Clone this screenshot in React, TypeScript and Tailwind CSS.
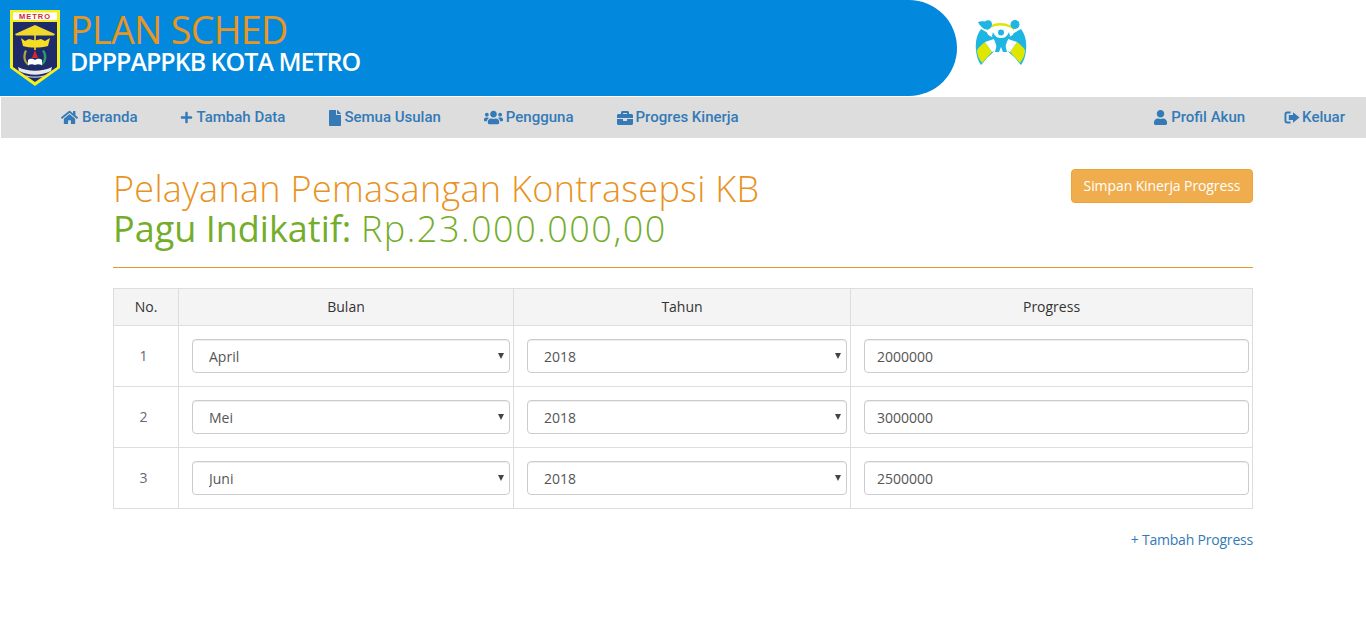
import { FaHome, FaPlus, FaFile, FaUsers, FaBriefcase, FaUser } from 'react-icons/fa';

const rows = [
  { no: 1, bulan: 'April', tahun: '2018', progress: '2000000' },
  { no: 2, bulan: 'Mei', tahun: '2018', progress: '3000000' },
  { no: 3, bulan: 'Juni', tahun: '2018', progress: '2500000' },
];
const bulanList = ['Januari', 'Februari', 'Maret', 'April', 'Mei', 'Juni', 'Juli', 'Agustus', 'September', 'Oktober', 'November', 'Desember'];

function LogoutIcon() {
  return (
    <svg width="16" height="15" viewBox="0 0 16 15" fill="currentColor">
      <path d="M6.5 1.5H3.2A2.7 2.7 0 0 0 .5 4.2v6.6A2.7 2.7 0 0 0 3.2 13.5h3.3v-1.9H3.4a1 1 0 0 1-1-1V4.4a1 1 0 0 1 1-1h3.1z" />
      <path d="M9 2.2 15.5 7.5 9 12.8V10H4.8V5H9z" />
    </svg>
  );
}

function MetroLogo() {
  return (
    <svg width="50" height="76" viewBox="0 0 50 76">
      <path d="M0 0h50v58L25 76 0 58z" fill="#f7ee1f" />
      <rect x="3" y="2.5" width="44" height="7.5" fill="#fff" />
      <text x="25" y="9" textAnchor="middle" fontSize="7.5" fontWeight="900" fill="#d9252b" fontFamily="Liberation Sans, sans-serif" letterSpacing="1">METRO</text>
      <path d="M3 12h44v45L25 72 3 57z" fill="#1f2a6b" />
      <path d="M25 15 45 24l-1 1.5H6L5 24z" fill="#f0d92a" />
      <rect x="24.2" y="16" width="1.6" height="24" fill="#f0d92a" />
      <path d="M11 28l4 3 4-2 6 1.5 6-1.5 4 2 5-3-2 8c-8 2-18 2-25 0z" fill="#f5dd24" />
      <path d="M15 40c-3 6-2 13 4 16l-1-3c-3-3-3-8-1-12z" fill="#a7a93a" />
      <path d="M34 40c4 5 3 13-3 16l1-3c2-3 3-8 0-12z" fill="#2f9a6b" />
      <path d="M25 40l3 8h-6z" fill="#d9252b" />
      <path d="M18 50c3-2 5-1 7 0 2-1 4-2 7 0v5c-3-1-5-1-7 0-2-1-4-1-7 0z" fill="#fff" />
      <path d="M8 57c10 5 24 5 34 0l-1 4c-11 5-21 5-32 0z" fill="#e8e8e8" />
      <path d="M15 65c6 2 14 2 20 0l-2 2c-5 1-11 1-16 0z" fill="#cfcfcf" />
    </svg>
  );
}

function KbLogo() {
  return (
    <svg width="52" height="46" viewBox="0 0 52 46">
      <path d="M6 9C2 14 0 22 1 30c.5 6 2 11 5 15L26 24l20 21c3-4 4.500-9 5-15 1-8-1-16-5-21l-7 4H13z" fill="#1db5e2" />
      <path d="M10 22l7 10-10 11c-3-4-5-8-5-13 2-3 5-6 8-8z" fill="#dfe600" />
      <path d="M42 22l-7 10 10 11c3-4 5-8 5-13-2-3-5-6-8-8z" fill="#dfe600" />
      <path d="M7 46c3-8 10-14 19-15 9 1 16 7 19 15z" fill="#fff" />
      <path d="M10 22l9-3 4 11-6 2z" fill="#fff" />
      <path d="M42 22l-9-3-4 11 6 2z" fill="#fff" />
      <ellipse cx="25.500" cy="10.500" rx="13.500" ry="7.500" fill="#dfe600" />
      <ellipse cx="25.500" cy="12" rx="13.500" ry="6.500" fill="#fff" />
      <circle cx="26" cy="12.500" r="3" fill="#1db5e2" />
      <path d="M18 12c2 5 5 6 8 6s6-1 8-6l1 4c-2 4-4 6-5 8l2 8h-4l-2-5-2 5h-4l2-8c-1-2-3-4-5-8z" fill="#1db5e2" />
      <path d="M3 2c2-1 5-1 7-.5 3-2.500 7-1 7 2.500s-3 6-6 5.500C8 9 5 6 3 2z" fill="#1db5e2" />
      <circle cx="40" cy="4.500" r="4.500" fill="#1db5e2" />
    </svg>
  );
}

function NavLink({ icon, label, gap }: { icon: React.ReactNode; label: string; gap: string }) {
  return (
    <a href="#" className={`flex items-center text-[15px] font-medium text-[#337ab7] ${gap}`}>
      {icon}
      {label}
    </a>
  );
}

function SelectBox({ value, options }: { value: string; options: string[] }) {
  return (
    <div className="relative">
      <select
        defaultValue={value}
        className="h-[34px] w-full appearance-none rounded border border-[#ccc] bg-white pl-[16px] text-[14px] text-[#555] shadow-[inset_0_1px_1px_rgba(0,0,0,0.075)]"
      >
        {options.map(o => <option key={o}>{o}</option>)}
      </select>
      <span className="absolute right-[6px] top-[14px] h-0 w-0 border-x-[3.5px] border-t-[6px] border-x-transparent border-t-[#444]" />
    </div>
  );
}

export default function App() {
  return (
    <div className="min-h-[618px] bg-white font-['Open_Sans',sans-serif]">
      <header className="flex h-[97px] items-start">
        <div className="flex h-[96px] w-[957px] items-center rounded-r-[48px] bg-[#0288dc] pl-[10px]">
          <MetroLogo />
          <div className="mb-[8px] ml-[10px] flex flex-col">
            <span className="text-[37.5px] leading-[38px] tracking-[-0.6px] text-[#e8961f]">PLAN SCHED</span>
            <span className="mt-[-4px] text-[25px] leading-[32px] font-semibold tracking-[-1px] text-white">DPPPAPPKB KOTA METRO</span>
          </div>
        </div>
        <div className="ml-[18px] mt-[20px]">
          <KbLogo />
        </div>
      </header>

      <nav className="ml-[1px] flex h-[41px] items-center justify-between bg-[#ddd] pl-[60px] pr-[21px] font-['Roboto',sans-serif]">
        <div className="flex items-center gap-[43px]">
          <NavLink gap="gap-[4px] -mr-[1px]" icon={<FaHome size={17} />} label="Beranda" />
          <NavLink gap="gap-[4px]" icon={<FaPlus size={13} />} label="Tambah Data" />
          <NavLink gap="gap-[4px]" icon={<FaFile size={16} className="-ml-[1px] -mr-[3px]" />} label="Semua Usulan" />
          <NavLink gap="gap-[3px]" icon={<FaUsers size={19} />} label="Pengguna" />
          <NavLink gap="gap-[3px]" icon={<FaBriefcase size={16} />} label="Progres Kinerja" />
        </div>
        <div className="flex items-center gap-[39px]">
          <NavLink gap="gap-[3px]" icon={<FaUser size={15} />} label="Profil Akun" />
          <NavLink gap="gap-[2px]" icon={<LogoutIcon />} label="Keluar" />
        </div>
      </nav>

      <main className="mx-auto w-[1140px] pt-[31px]">
        <div className="flex items-start justify-between">
          <h1 className="text-[36px] leading-[40px] font-light tracking-[0.3px] text-[#e8931f]">
            Pelayanan Pemasangan Kontrasepsi KB
            <br />
            <span className="text-[#74ad2a]">
              <span className="font-normal tracking-normal">Pagu Indikatif:</span>{' '}
              <span className="tracking-[1.5px]">Rp.23.000.000,00</span>
            </span>
          </h1>
          <button className="h-[34px] w-[182px] rounded border border-[#eea236] bg-[#f0ad4e] pb-[2px] text-[14px] tracking-[-0.1px] text-white">
            Simpan Kinerja Progress
          </button>
        </div>

        <hr className="mt-[18px] border-t border-[#e49a2c]" />

        <table className="mt-[20px] w-full table-fixed border-collapse border border-[#ddd] text-[14px] text-[#555]">
          <colgroup>
            <col className="w-[65px]" />
            <col className="w-[335px]" />
            <col className="w-[337px]" />
            <col />
          </colgroup>
          <thead>
            <tr className="h-[37px] bg-[#f4f4f4] text-[#333]">
              <th className="border border-[#ddd] pb-[2px] font-normal">No.</th>
              <th className="border border-[#ddd] pb-[2px] font-normal">Bulan</th>
              <th className="border border-[#ddd] pb-[2px] font-normal">Tahun</th>
              <th className="border border-[#ddd] pb-[2px] font-normal">Progress</th>
            </tr>
          </thead>
          <tbody>
            {rows.map(r => (
              <tr key={r.no} className="h-[61px]">
                <td className="border border-[#ddd] pb-[2px] pr-[5px] text-center text-[#667]">{r.no}</td>
                <td className="border border-[#ddd] pl-[13px] pr-[3px]">
                  <SelectBox value={r.bulan} options={bulanList} />
                </td>
                <td className="border border-[#ddd] pl-[13px] pr-[3px]">
                  <SelectBox value={r.tahun} options={['2017', '2018', '2019']} />
                </td>
                <td className="border border-[#ddd] pl-[13px] pr-[3px]">
                  <input
                    defaultValue={r.progress}
                    className="h-[34px] w-full rounded border border-[#ccc] bg-white px-[12px] text-[14px] text-[#555] shadow-[inset_0_1px_1px_rgba(0,0,0,0.075)]"
                  />
                </td>
              </tr>
            ))}
          </tbody>
        </table>

        <div className="mt-[21px] text-right text-[14px] leading-[20px] tracking-[-0.2px]">
          <a href="#" className="text-[#337ab7]">+ Tambah Progress</a>
        </div>
      </main>
    </div>
  );
}
